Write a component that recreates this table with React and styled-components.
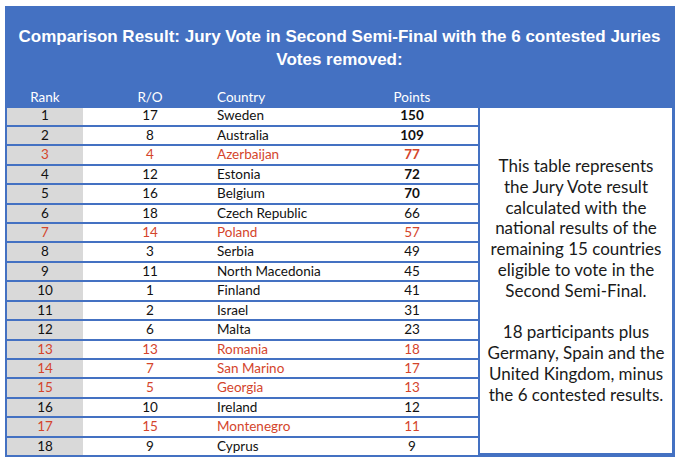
import React from "react";
import styled, { createGlobalStyle } from "styled-components";

const Global = createGlobalStyle`
  html, body { margin: 0; padding: 0; background: #ffffff; }
  body { width: 680px; height: 464px; overflow: hidden; }
`;

const Page = styled.div`
  padding: 6px 5px 0 5px;
`;

const Board = styled.div`
  width: 670px;
  height: 451px;
  box-sizing: border-box;
  background: #4471c2;
  padding: 19px 3px 2px 2px;
  display: flex;
  flex-direction: column;
`;

const Title = styled.h1`
  margin: 0;
  font-family: "Liberation Sans", Arial, sans-serif;
  font-weight: 700;
  font-size: 17px;
  line-height: 23px;
  color: #ffffff;
  text-align: center;
`;

const cols = "76px 134px 129px 132px";

const HeaderRow = styled.div`
  display: grid;
  grid-template-columns: ${cols};
  height: 19px;
  margin-top: 16px;
  align-items: center;
`;

const HeaderCell = styled.div`
  font-family: "Lato", "Liberation Sans", sans-serif;
  font-size: 13.5px;
  color: #ffffff;
  text-align: ${(p) => (p.$left ? "left" : "center")};
`;

const Body = styled.div`
  display: flex;
  gap: 2px;
  flex: 1;
  min-height: 0;
  padding-top: 1.5px;
`;

const Table = styled.div`
  width: 471px;
  display: flex;
  flex-direction: column;
  gap: 2px;
`;

const Row = styled.div`
  display: grid;
  grid-template-columns: ${cols};
  height: 17.5px;
  background: #ffffff;
  align-items: center;
  font-family: "Lato", "Liberation Sans", sans-serif;
  font-size: 13.5px;
  color: ${(p) => (p.$red ? "#d4452c" : "#111111")};
`;

const Cell = styled.div`
  height: 100%;
  display: flex;
  align-items: center;
  justify-content: ${(p) => (p.$left ? "flex-start" : "center")};
  background: ${(p) => (p.$gray ? "#d9d9d9" : "transparent")};
  font-weight: ${(p) => (p.$bold ? 700 : 400)};
  line-height: 1;
`;

const Panel = styled.div`
  width: 192px;
  background: #ffffff;
  display: flex;
  align-items: center;
  justify-content: center;
  margin-bottom: 2px;
`;

const PanelText = styled.p`
  margin: 0;
  font-family: "Lato", "Liberation Sans", sans-serif;
  font-size: 17px;
  line-height: 20.8px;
  color: #1a1a1a;
  text-align: center;
  padding-top: 1px;
`;

const rows = [
  [1, 17, "Sweden", 150, false, true],
  [2, 8, "Australia", 109, false, true],
  [3, 4, "Azerbaijan", 77, true, true],
  [4, 12, "Estonia", 72, false, true],
  [5, 16, "Belgium", 70, false, true],
  [6, 18, "Czech Republic", 66, false, false],
  [7, 14, "Poland", 57, true, false],
  [8, 3, "Serbia", 49, false, false],
  [9, 11, "North Macedonia", 45, false, false],
  [10, 1, "Finland", 41, false, false],
  [11, 2, "Israel", 31, false, false],
  [12, 6, "Malta", 23, false, false],
  [13, 13, "Romania", 18, true, false],
  [14, 7, "San Marino", 17, true, false],
  [15, 5, "Georgia", 13, true, false],
  [16, 10, "Ireland", 12, false, false],
  [17, 15, "Montenegro", 11, true, false],
  [18, 9, "Cyprus", 9, false, false],
];

export default function App() {
  return (
    <>
      <Global />
      <Page>
        <Board>
          <Title>
            Comparison Result: Jury Vote in Second Semi-Final with the 6 contested Juries
            <br />
            Votes removed:
          </Title>
          <HeaderRow>
            <HeaderCell>Rank</HeaderCell>
            <HeaderCell>R/O</HeaderCell>
            <HeaderCell $left>Country</HeaderCell>
            <HeaderCell>Points</HeaderCell>
          </HeaderRow>
          <Body>
            <Table>
              {rows.map(([rank, ro, country, pts, red, bold]) => (
                <Row key={rank} $red={red}>
                  <Cell $gray>{rank}</Cell>
                  <Cell>{ro}</Cell>
                  <Cell $left>{country}</Cell>
                  <Cell $bold={bold}>{pts}</Cell>
                </Row>
              ))}
            </Table>
            <Panel>
              <PanelText>
                This table represents
                <br />
                the Jury Vote result
                <br />
                calculated with the
                <br />
                national results of the
                <br />
                remaining 15 countries
                <br />
                eligible to vote in the
                <br />
                Second Semi-Final.
                <br />
                <br />
                18 participants plus
                <br />
                Germany, Spain and the
                <br />
                United Kingdom, minus
                <br />
                the 6 contested results.
              </PanelText>
            </Panel>
          </Body>
        </Board>
      </Page>
    </>
  );
}
